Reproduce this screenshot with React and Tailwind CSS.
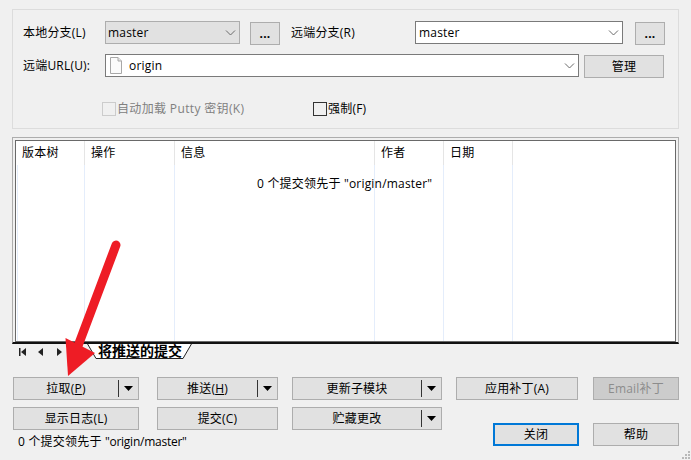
const font = '[font-family:"Open_Sans","Noto_Sans_CJK_SC",sans-serif]';

const Chevron = ({ className = '' }) => (
  <svg width="11" height="6" viewBox="0 0 11 6" className={className}>
    <path d="M1 0.5 L5.5 5 L10 0.5" fill="none" stroke="#6a6a6a" strokeWidth="1" />
  </svg>
);

const Btn = ({ className = '', children, split = false, disabled = false, focus = false }) => (
  <div className={`relative h-[23px] flex items-center justify-center text-[12px] leading-none ${focus ? 'border-2 border-[#0078d7]' : 'border border-[#adadad]'} ${disabled ? 'text-[#8c8c8c] bg-[#cccccc]' : 'text-black bg-[#e1e1e1]'} ${className}`}>
    <span className={split ? 'flex-1 text-center' : ''}>{children}</span>
    {split && (
      <>
        <span className="w-px h-[17px] bg-[#333333]" />
        <span className="w-[19px] flex justify-center">
          <svg width="9" height="5" viewBox="0 0 9 5"><path d="M0 0 H9 L4.5 5 Z" fill="#000" /></svg>
        </span>
      </>
    )}
  </div>
);

const Select = ({ className = '', children, gray = false }) => (
  <div className={`h-[23px] flex items-center justify-between border pl-[2px] pr-[3px] text-[12px] ${gray ? 'bg-[#e1e1e1] border-[#adadad]' : 'bg-white border-[#7a7a7a]'} ${className}`}>
    <span className="flex items-center">{children}</span>
    <Chevron />
  </div>
);

const columns = [
  { w: 'w-[69px]', label: '版本树', pad: 'pl-[6px]', body: 'ml-px border-l border-[#a9c4ee]' },
  { w: 'w-[90px]', label: '操作', pad: 'pl-[6px]', body: '' },
  { w: 'w-[200px]', label: '信息', pad: 'pl-[6px]', body: '' },
  { w: 'w-[69px]', label: '作者', pad: 'pl-[6px]', body: '' },
  { w: 'w-[69px]', label: '日期', pad: 'pl-[6px]', body: '' },
];

export default function App() {
  return (
    <div className={`relative w-[691px] h-[460px] overflow-hidden bg-[#f0f0f0] text-[12px] tracking-[0.2px] text-black px-3 pt-[9px] ${font}`}>
      {/* top group */}
      <div className="h-[120px] w-[667px] border border-[#dcdcdc] pl-[10px] pt-[11px]">
        <div className="flex items-start">
          <div className="w-[82px] h-[23px] flex items-center">本地分支(L)</div>
          <Select gray className="w-[135px]">master</Select>
          <Btn className="w-[30px] ml-[10px] mt-px font-bold">...</Btn>
          <div className="ml-[11px] w-[124px] h-[23px] flex items-center">远端分支(R)</div>
          <Select className="w-[208px]"><span className="pl-px">master</span></Select>
          <Btn className="w-[30px] ml-3 mt-px font-bold">...</Btn>
        </div>
        <div className="flex items-start mt-[9px]">
          <div className="w-[82px] h-[23px] flex items-center">远端URL(U):</div>
          <Select className="w-[474px]">
            <svg width="12" height="17" viewBox="0 0 12 17" className="ml-[2px] mr-[7px]">
              <path d="M0.5 0.5 H8 L11.5 4 V16.5 H0.5 Z" fill="#fbfbfb" stroke="#a8a8a8" />
              <path d="M8 0.5 V4 H11.5" fill="#e8e8e8" stroke="#a8a8a8" />
            </svg>
            origin
          </Select>
          <Btn className="w-[80px] ml-[5px] mt-px">管理</Btn>
        </div>
        <div className="flex items-center mt-[23px] h-[15px] ml-[79px]">
          <span className="w-[14px] h-[14px] border border-[#cccccc] bg-[#f0f0f0]" />
          <span className="ml-px w-[196px] tracking-[0.35px] text-[#808080]">自动加载 Putty 密钥(K)</span>
          <span className="w-[14px] h-[14px] border border-[#333333]" />
          <span className="ml-px">强制(F)</span>
        </div>
      </div>

      {/* commit list */}
      <div className="mt-2 w-[667px] h-[207px] border border-[#adadad] border-b-2 border-b-[#111111] px-[2px] pt-[2px]">
        <div className="relative h-[202px] bg-white border border-[#696969] flex">
          {columns.map((c) => (
            <div key={c.label} className={`${c.w} h-full flex flex-col`}>
              <div className={`h-6 ${c.pad} flex items-center border-r border-[#e5e5e5]`}>{c.label}</div>
              <div className={`flex-1 border-r border-[#e4edfb] ${c.body}`} />
            </div>
          ))}
          <p className="absolute left-[241px] top-[35px] leading-4">0 个提交领先于 "origin/master"</p>
        </div>
      </div>

      {/* tabs */}
      <div className="h-[33px] flex items-start">
        <div className="flex items-center pl-[7px] pt-[4px]">
          <svg width="7" height="8" viewBox="0 0 7 8"><path d="M0 0H1.5V8H0Z M7 0V8L2 4Z" fill="#222" /></svg>
          <svg width="5" height="8" viewBox="0 0 5 8" className="ml-[12px]"><path d="M5 0V8L0 4Z" fill="#222" /></svg>
          <svg width="5" height="8" viewBox="0 0 5 8" className="ml-[14px]"><path d="M0 0V8L5 4Z" fill="#222" /></svg>
        </div>
        <div className="relative ml-[25px] w-[106px] h-[15px]">
          <svg width="106" height="15" viewBox="0 0 106 15" className="absolute inset-0">
            <path d="M0 -1 L9 14.5 H96 L105 -1" fill="#fff" stroke="#222" />
          </svg>
          <span className="absolute left-[11px] top-[-3px] text-[14px] leading-5 font-bold whitespace-nowrap tracking-normal">将推送的提交</span>
        </div>
      </div>

      {/* bottom buttons */}
      <div className="flex pl-px">
        <div className="w-[443px]">
          <div className="flex">
            <Btn split className="w-[126px]">拉取(<u>P</u>)</Btn>
            <Btn split className="w-[121px] ml-[18px]">推送(<u>H</u>)</Btn>
            <Btn split className="w-[150px] ml-[14px]">更新子模块</Btn>
          </div>
          <div className="flex mt-[7px]">
            <Btn className="w-[126px]">显示日志(L)</Btn>
            <Btn className="w-[121px] ml-[18px]">提交(C)</Btn>
            <Btn split className="w-[150px] ml-[14px]">贮藏更改</Btn>
          </div>
          <p className="mt-1 pl-[5px] leading-4">0 个提交领先于 <span className="tracking-[-0.25px]">"origin/master"</span></p>
        </div>
        <div className="w-[223px]">
          <div className="flex justify-between">
            <Btn className="w-[122px]">应用补丁(A)</Btn>
            <Btn disabled className="w-[86px]">Email补丁</Btn>
          </div>
          <div className="flex justify-end gap-[14px] mt-[23px]">
            <Btn focus className="w-[86px]">关闭</Btn>
            <Btn className="w-[86px]">帮助</Btn>
          </div>
        </div>
      </div>

      {/* size grip */}
      <svg width="9" height="9" viewBox="0 0 9 9" className="absolute right-0 bottom-0">
        <path d="M6 0h2v2h-2z M3 3h2v2h-2z M6 3h2v2h-2z M0 6h2v2h-2z M3 6h2v2h-2z M6 6h2v2h-2z" fill="#b8b8b8" />
      </svg>

      {/* red arrow annotation */}
      <svg width="691" height="460" viewBox="0 0 691 460" className="absolute inset-0 pointer-events-none">
        <path d="M116 245 L78 346" stroke="#ee1c25" strokeWidth="9" strokeLinecap="round" fill="none" />
        <path d="M65.5 338 L95 353 L68 376 Z" fill="#ee1c25" />
      </svg>
    </div>
  );
}
